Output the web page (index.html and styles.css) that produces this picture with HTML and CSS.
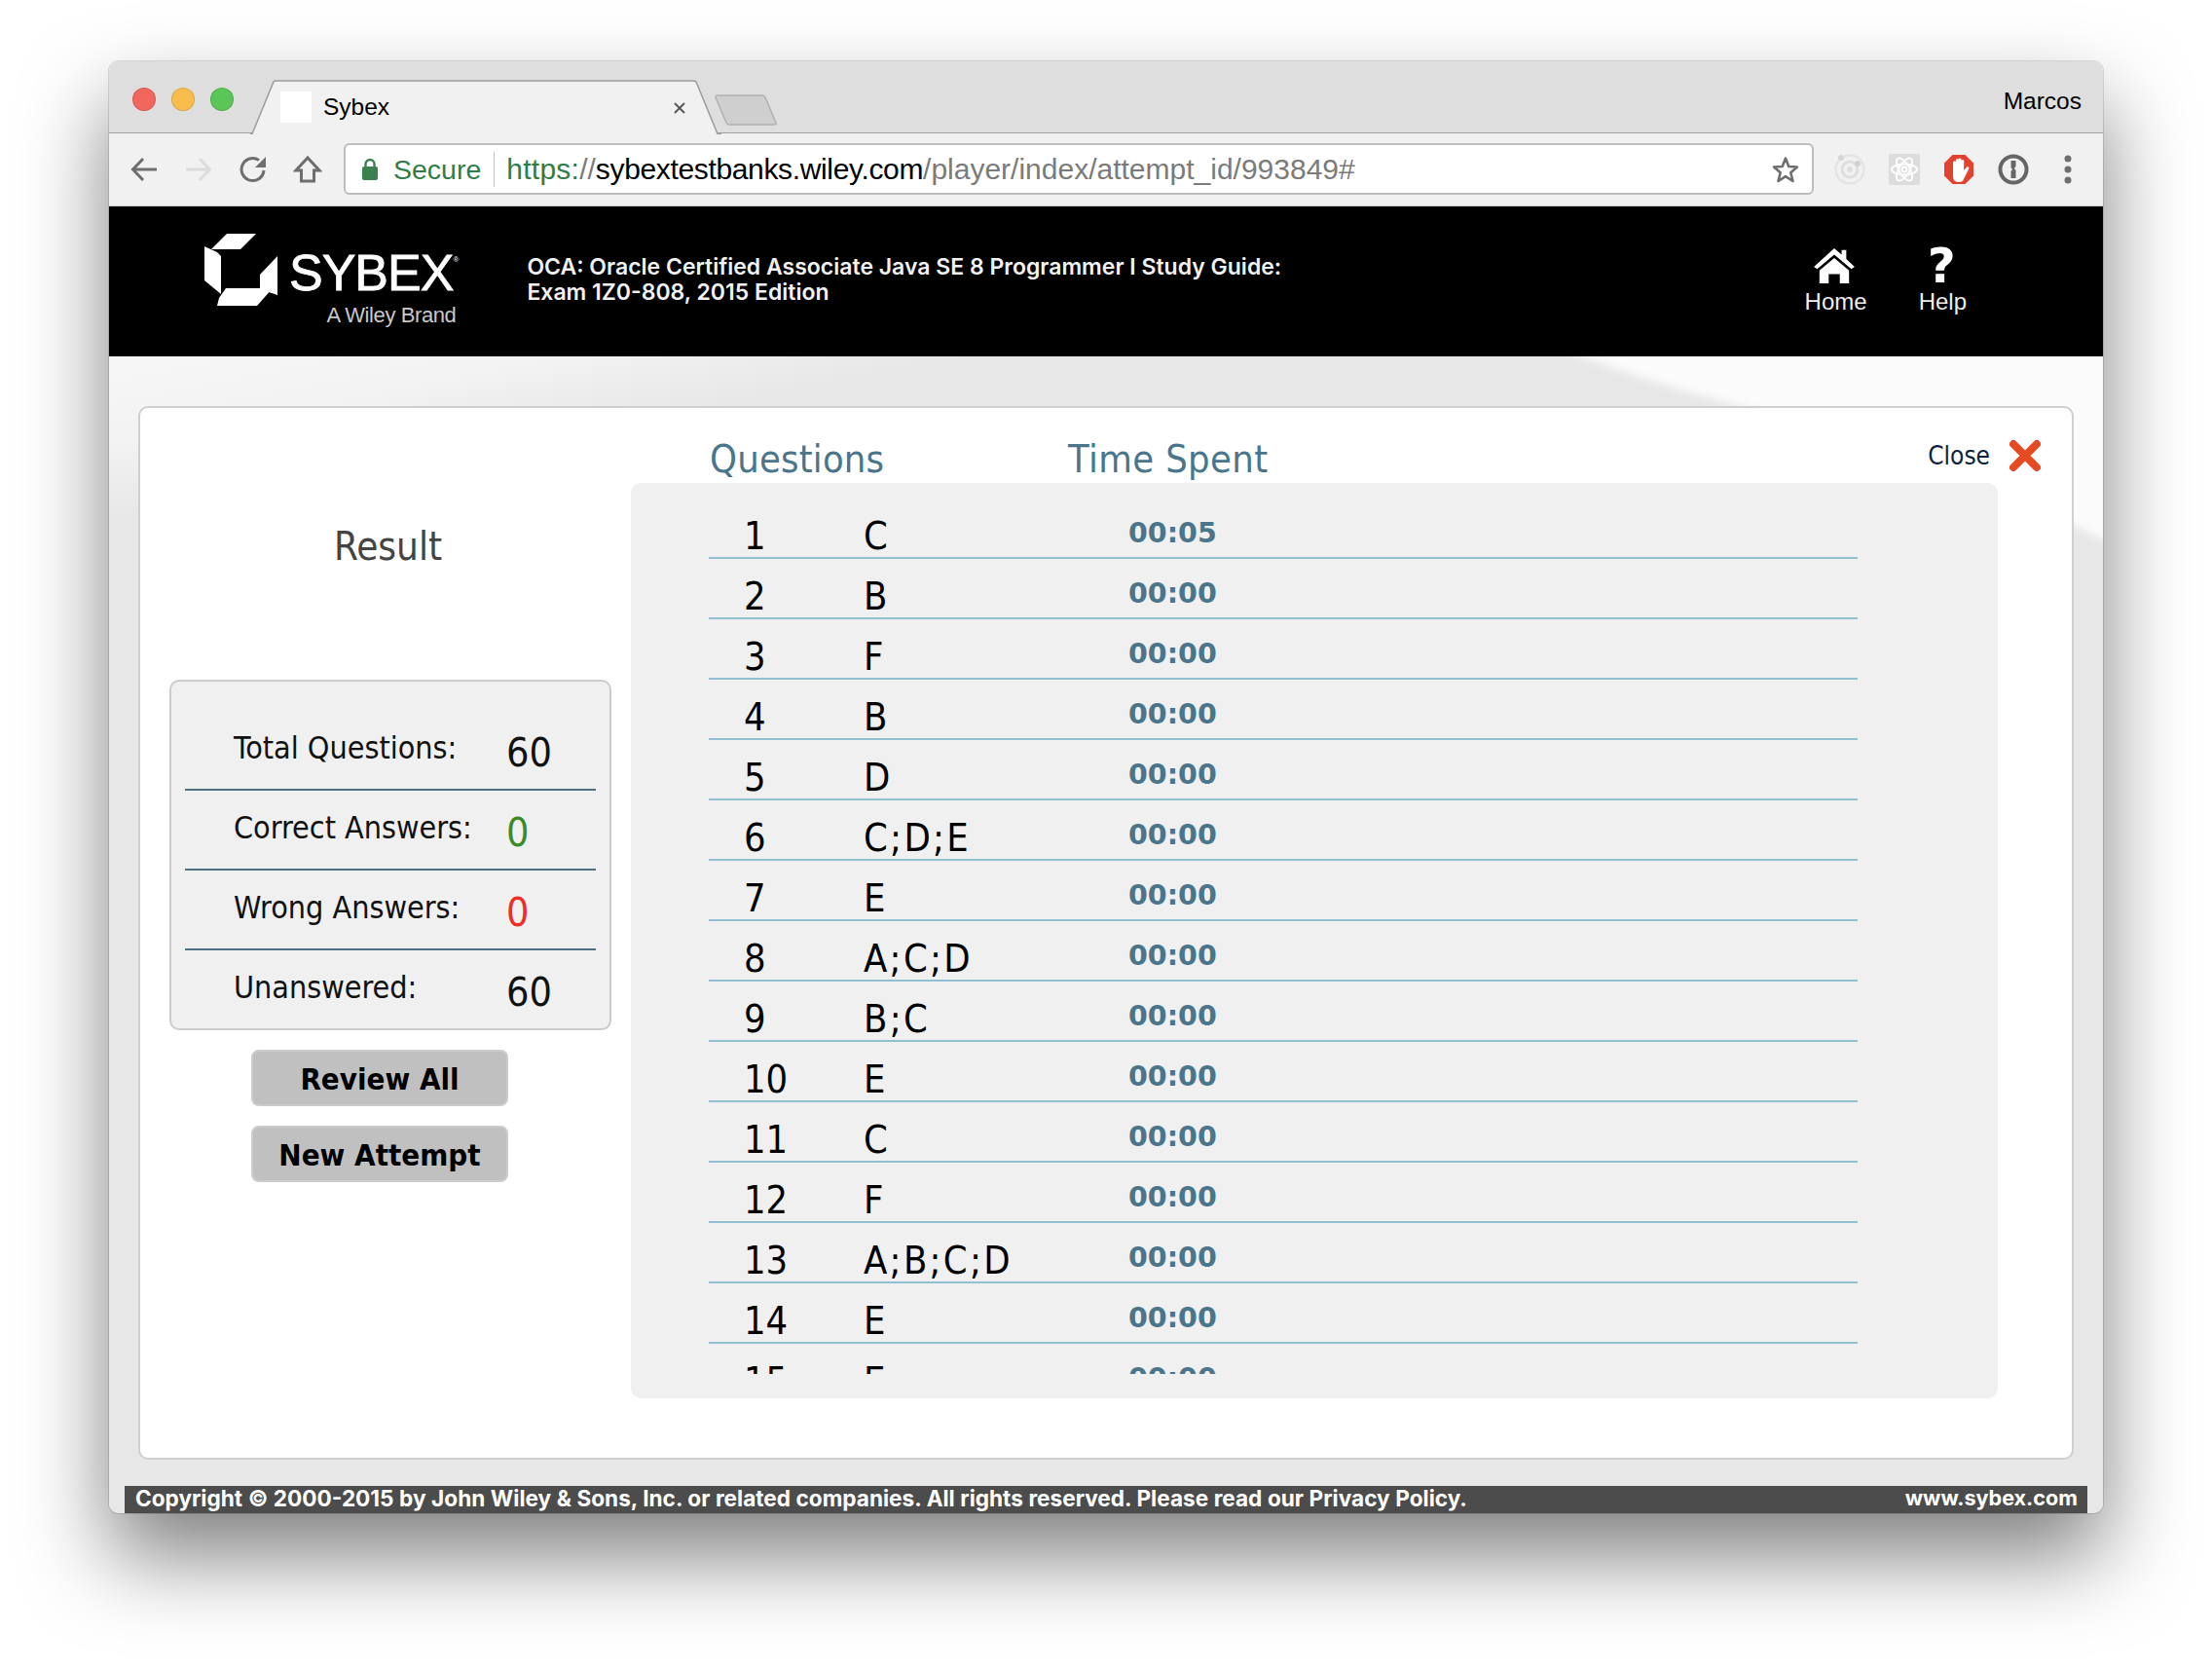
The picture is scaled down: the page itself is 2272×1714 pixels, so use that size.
FILE: index.html
```html
<!DOCTYPE html>
<html lang="en">
<head>
    <meta charset="UTF-8">
    <title>Sybex</title>
    <link rel="stylesheet" href="styles.css">
</head>
<body>

<div class="window">

    <div class="tabstrip">
        <span class="dot dot-red"></span>
        <span class="dot dot-yellow"></span>
        <span class="dot dot-green"></span>
        <div class="tab">
            <svg class="tab-shape" width="484" height="56" viewBox="0 0 484 56"><path d="M0 55.5 L2 55.5 L24 2 Q25 1 27 1 L455 1 Q457 1 458 2 L480 55.5 L484 55.5" fill="#f1f1f1" stroke="#9c9c9c" stroke-width="1.5"/></svg>
            <span class="favicon"></span>
            <span class="tab-title">Sybex</span>
            <svg class="tab-close" width="14" height="14" viewBox="0 0 14 14"><path d="M2 2 L12 12 M12 2 L2 12" stroke="#555" stroke-width="1.8"/></svg>
        </div>
        <svg class="newtab" width="66" height="34" viewBox="0 0 66 34"><path d="M4 2 H50 Q52 2 53 4 L64 30 Q64.500 32 62 32 H16 Q14 32 13 30 L2 4 Q2 2 4 2 Z" fill="#cfcfcf" stroke="#b0b0b0" stroke-width="1.500"/></svg>
        <span class="profile">Marcos</span>
    </div>

    <div class="toolbar">
        <span class="tool"><svg width="28" height="28" viewBox="0 0 28 28"><path d="M27 14 H3 M13 3 L2.500 14 L13 25" fill="none" stroke="#6e6e6e" stroke-width="3"/></svg></span>
        <span class="tool"><svg width="28" height="28" viewBox="0 0 28 28"><path d="M1 14 H25 M15 3 L25.500 14 L15 25" fill="none" stroke="#dcdcdc" stroke-width="3"/></svg></span>
        <span class="tool"><svg width="28" height="28" viewBox="0 0 28 28"><path d="M25 15 A11.500 11.500 0 1 1 20 4.500" fill="none" stroke="#6e6e6e" stroke-width="3"/><path d="M27 1 V12 H16 Z" fill="#6e6e6e"/></svg></span>
        <span class="tool"><svg width="30" height="30" viewBox="0 0 30 30"><path d="M15 3 L3 16 H8.500 V27 H21.500 V16 H27 Z" fill="none" stroke="#6e6e6e" stroke-width="3"/></svg></span>

        <div class="omnibox">
            <svg class="lock" width="18" height="24" viewBox="0 0 18 24"><rect x="1" y="9" width="16" height="14" rx="2" fill="#3a8150"/><path d="M4.500 10 V6.500 A4.500 4.500 0 0 1 13.500 6.500 V10" fill="none" stroke="#3a8150" stroke-width="2.400"/></svg>
            <span class="secure">Secure</span>
            <span class="url"><span class="url-scheme">https:</span><span class="url-dim">//</span><span class="url-host">sybextestbanks.wiley.com</span><span class="url-dim">/player/index/attempt_id/993849#</span></span>
            <svg class="star" width="30" height="30" viewBox="0 0 30 30"><path d="M15 3.500 L18.300 12 L27 12.500 L20.300 18.200 L22.500 27 L15 22.200 L7.500 27 L9.700 18.200 L3 12.500 L11.700 12 Z" fill="none" stroke="#6e6e6e" stroke-width="2.600" stroke-linejoin="round"/></svg>
        </div>

        <div class="extensions">
            <span class="tool"><svg width="32" height="34" viewBox="0 0 32 34"><circle cx="16" cy="17" r="14.500" fill="none" stroke="#e4e4e4" stroke-width="2.500"/><circle cx="16" cy="17" r="8" fill="none" stroke="#dedede" stroke-width="3"/><circle cx="16" cy="17" r="3" fill="#dedede"/><circle cx="7" cy="5" r="3" fill="#d6d6d6"/><circle cx="24" cy="11" r="3" fill="#d0d0d0"/></svg></span>
            <span class="tool"><svg width="32" height="32" viewBox="0 0 32 32"><rect width="32" height="32" rx="2" fill="#dcdcdc"/><g fill="none" stroke="#fff" stroke-width="1.800"><ellipse cx="16" cy="16" rx="13" ry="5.500"/><ellipse cx="16" cy="16" rx="13" ry="5.500" transform="rotate(60 16 16)"/><ellipse cx="16" cy="16" rx="13" ry="5.500" transform="rotate(120 16 16)"/><circle cx="16" cy="16" r="2.500"/></g></svg></span>
            <span class="tool"><svg width="32" height="32" viewBox="0 0 32 32"><path d="M9.500 1 H22.500 L31 9.500 V22.500 L22.500 31 H9.500 L1 22.500 V9.500 Z" fill="#e2432f"/><path d="M10 16 V9 a1.400 1.400 0 0 1 2.800 0 V6.500 a1.400 1.400 0 0 1 2.800 0 V6 a1.400 1.400 0 0 1 2.800 0 V7.500 a1.400 1.400 0 0 1 2.800 0 V17 L24 13.500 a1.500 1.500 0 0 1 2.300 1.800 L21 26 Q20 29 16 29 Q10 29 10 23 Z" fill="#fff"/></svg></span>
            <span class="tool"><svg width="32" height="32" viewBox="0 0 32 32"><circle cx="16" cy="16" r="13.500" fill="none" stroke="#666" stroke-width="4"/><path d="M13.500 7 H18.500 V13 L16.800 15 L18.500 17 V25 H13.500 V18 L15 16 L13.500 14 Z" fill="#666"/></svg></span>
            <span class="tool"><svg width="8" height="30" viewBox="0 0 8 30"><circle cx="4" cy="4" r="3.500" fill="#6e6e6e"/><circle cx="4" cy="15" r="3.500" fill="#6e6e6e"/><circle cx="4" cy="26" r="3.500" fill="#6e6e6e"/></svg></span>
        </div>
    </div>

    <div class="site-header">
        <div class="logo">
            <svg class="logo-mark" width="78" height="78" viewBox="0 0 78 78">
                <g fill="#fff">
                    <path d="M24 1 H54 L38 17 H8 Z"/>
                    <path d="M1 14 L14 20 L18 24 V63 L1 49 Z"/>
                    <path d="M23 57 H71 L55 75 H14 L16 67 Z"/>
                    <path d="M76 24 V64 L58 58 V43 Z"/>
                </g>
            </svg>
            <div class="logo-words">
                <span class="logo-name">SYBEX<span class="logo-reg">®</span></span>
                <span class="logo-tag">A Wiley Brand</span>
            </div>
        </div>
        <div class="book-title">
            OCA: Oracle Certified Associate Java SE 8 Programmer I Study Guide:<br>
            Exam 1Z0-808, 2015 Edition
        </div>
        <div class="site-nav">
            <div class="nav-item">
                <svg class="nav-icon" width="42" height="38" viewBox="0 0 44 40"><path d="M22 1 L30 8 V3 H35 V12.500 L44 21 L40.500 23.500 L22 8 L3.500 23.500 L0 21 Z M6 25 L22 11.500 L38 25 V39 H28 V29 H16 V39 H6 Z" fill="#fff"/></svg>
                <span>Home</span>
            </div>
            <div class="nav-item">
                <span class="nav-help">?</span>
                <span>Help</span>
            </div>
        </div>
    </div>

    <div class="content">
        <svg class="swoosh" width="2048" height="260" viewBox="0 0 2048 260"><defs><filter id="soft"><feGaussianBlur stdDeviation="4"/></filter></defs><path d="M1485 -10 Q1590 30 1690 55 Q1900 110 2060 195 L2060 -10 Z" fill="#fbfbfb" filter="url(#soft)"/></svg>

        <div class="panel">
            <div class="close">Close <svg width="34" height="34" viewBox="0 0 34 34"><path d="M5 5 L29 29 M29 5 L5 29" stroke="#e54b23" stroke-width="8" stroke-linecap="round"/></svg></div>

            <div class="result-col">
                <div class="result-title">Result</div>
                <div class="result-box">
                    <div class="result-row"><span class="result-label">Total Questions:</span><span class="result-value">60</span></div>
                    <div class="result-row"><span class="result-label">Correct Answers:</span><span class="result-value good">0</span></div>
                    <div class="result-row"><span class="result-label">Wrong Answers:</span><span class="result-value bad">0</span></div>
                    <div class="result-row"><span class="result-label">Unanswered:</span><span class="result-value">60</span></div>
                </div>
                <button class="btn">Review All</button>
                <button class="btn">New Attempt</button>
            </div>

            <div class="questions-col">
                <div class="questions-head">
                    <span class="head-questions">Questions</span>
                    <span>Time Spent</span>
                </div>
                <div class="questions-box">
                    <div class="rows">
                        <div class="row"><span>1</span><span class="answer">C</span><span class="time">00:05</span></div>
                        <div class="row"><span>2</span><span class="answer">B</span><span class="time">00:00</span></div>
                        <div class="row"><span>3</span><span class="answer">F</span><span class="time">00:00</span></div>
                        <div class="row"><span>4</span><span class="answer">B</span><span class="time">00:00</span></div>
                        <div class="row"><span>5</span><span class="answer">D</span><span class="time">00:00</span></div>
                        <div class="row"><span>6</span><span class="answer">C;D;E</span><span class="time">00:00</span></div>
                        <div class="row"><span>7</span><span class="answer">E</span><span class="time">00:00</span></div>
                        <div class="row"><span>8</span><span class="answer">A;C;D</span><span class="time">00:00</span></div>
                        <div class="row"><span>9</span><span class="answer">B;C</span><span class="time">00:00</span></div>
                        <div class="row"><span>10</span><span class="answer">E</span><span class="time">00:00</span></div>
                        <div class="row"><span>11</span><span class="answer">C</span><span class="time">00:00</span></div>
                        <div class="row"><span>12</span><span class="answer">F</span><span class="time">00:00</span></div>
                        <div class="row"><span>13</span><span class="answer">A;B;C;D</span><span class="time">00:00</span></div>
                        <div class="row"><span>14</span><span class="answer">E</span><span class="time">00:00</span></div>
                        <div class="row"><span>15</span><span class="answer">E</span><span class="time">00:00</span></div>
                    </div>
                </div>
            </div>
        </div>

        <div class="site-footer">
            <span>Copyright © 2000-2015 by John Wiley &amp; Sons, Inc. or related companies. All rights reserved. Please read our Privacy Policy.</span>
            <span class="footer-link">www.sybex.com</span>
        </div>
    </div>
</div>

</body>
</html>
```

FILE: styles.css
```css
body {
    margin: 0;
    padding: 63px 112px 0 112px;
    height: 1714px;
    box-sizing: border-box;
    background-color: #fff;
    overflow: hidden;
    font-family: "Liberation Sans", Arial, sans-serif;
}

.window {
    height: 1491px;
    border-radius: 10px;
    box-shadow: 0 44px 88px rgba(0, 0, 0, 0.5), 0 0 0 1px rgba(0, 0, 0, 0.12);
    overflow: hidden;
    display: flex;
    flex-direction: column;
}

/* browser chrome */
.tabstrip {
    height: 73px;
    flex: none;
    display: flex;
    background-color: #dedede;
    border-bottom: 1px solid #a0a0a0;
    padding: 0 22px 0 24px;
    position: relative;
}

.dot {
    width: 24px;
    height: 24px;
    border-radius: 50%;
    margin: 27px 16px 0 0;
    box-sizing: border-box;
    border: 1px solid rgba(0, 0, 0, 0.12);
}

.dot-red { background-color: #f2665e; }
.dot-yellow { background-color: #f8bd4c; }
.dot-green { background-color: #5ac658; }

.tab {
    position: relative;
    width: 482px;
    height: 56px;
    margin: 19px 0 0 1px;
    display: flex;
    align-items: flex-start;
}

.tab-shape {
    position: absolute;
    left: 0;
    top: 0;
}

.favicon {
    position: relative;
    width: 32px;
    height: 32px;
    margin: 12px 0 0 31px;
    background-color: #fff;
}

.tab-title {
    position: relative;
    margin: 14px 0 0 12px;
    font-size: 24.5px;
    line-height: 28px;
    color: #000;
}

.tab-close {
    position: absolute;
    left: 434px;
    top: 22px;
}

.newtab {
    margin: 33px 0 0 -6px;
}

.profile {
    margin: 26px 0 0 auto;
    font-size: 24.5px;
    line-height: 30px;
    color: #000;
}

.toolbar {
    height: 74px;
    flex: none;
    display: flex;
    align-items: center;
    padding: 0 8px;
    background-color: #f1f1f1;
    border-bottom: 1px solid #cfcfcf;
}

.tool {
    width: 56px;
    height: 56px;
    flex: none;
    display: flex;
    align-items: center;
    justify-content: center;
}

.omnibox {
    flex: 1;
    height: 53px;
    margin: -1px 9px 0 9px;
    box-sizing: border-box;
    display: flex;
    align-items: center;
    background-color: #fff;
    border: 2px solid #bdbdbd;
    border-radius: 6px;
    padding: 0 12px 0 16px;
    font-size: 30px;
}

.secure {
    margin-left: 15px;
    padding-right: 13px;
    font-size: 28.5px;
    line-height: 36px;
    color: #2f7d4c;
    border-right: 1px solid #c4c4c4;
}

.url { margin-left: 12px; }
.url-scheme { color: #2f7d4c; letter-spacing: 0.25px; }
.url-dim { color: #7b7b7b; }
.url-host { color: #000; letter-spacing: -0.35px; }

.star { margin-left: auto; }

.extensions {
    display: flex;
    flex: none;
}

/* site header */
.site-header {
    height: 154px;
    flex: none;
    display: flex;
    align-items: center;
    background-color: #000;
    color: #fff;
    padding: 0 140px 0 97px;
}

.logo {
    display: flex;
    align-items: flex-start;
    height: 100px;
}

.logo-mark { flex: none; }

.logo-words {
    display: flex;
    flex-direction: column;
    align-items: flex-end;
    margin-left: 10px;
}

.logo-name {
    position: relative;
    font-size: 52px;
    line-height: 44px;
    letter-spacing: -1px;
    margin-top: 19px;
    -webkit-text-stroke: 0.8px #fff;
}

.logo-reg {
    position: absolute;
    right: -6px;
    top: 4px;
    font-size: 8px;
    line-height: 10px;
    letter-spacing: 0;
    -webkit-text-stroke: 0;
}

.logo-tag {
    font-size: 22px;
    line-height: 28px;
    margin: 8px -3px 0 0;
    letter-spacing: -0.4px;
    color: #c8c8c8;
}

.book-title {
    margin-left: 76px;
    margin-top: -4px;
    font-family: Inter, sans-serif;
    font-weight: 600;
    font-size: 23px;
    line-height: 26px;
    color: #f2f2f2;
}

.site-nav {
    margin-left: auto;
    display: flex;
    gap: 53px;
}

.nav-item {
    display: flex;
    flex-direction: column;
    align-items: center;
    font-size: 24px;
    line-height: 28px;
    color: #eee;
}

.nav-icon { margin: 0 4px 4px 0; }

.nav-help {
    height: 42px;
    margin: -2px 2px 2px 0;
    font-family: "DejaVu Sans", sans-serif;
    font-weight: bold;
    font-size: 50px;
    line-height: 42px;
    color: #fff;
}

/* page */
.content {
    position: relative;
    flex: 1;
    display: flex;
    flex-direction: column;
    padding: 51px 0 0 30px;
    background: linear-gradient(169deg, #f7f7f7 0, #f2f2f2 6%, #e7e7e7 11%);
    font-family: "DejaVu Sans", sans-serif;
    font-stretch: condensed;
}

.swoosh {
    position: absolute;
    left: 0;
    top: 0;
}

.panel {
    position: relative;
    width: 1988px;
    height: 1082px;
    flex: none;
    box-sizing: border-box;
    display: flex;
    background-color: #fff;
    border: 2px solid #cfcfcf;
    border-radius: 10px;
}

.close {
    position: absolute;
    right: 31px;
    top: 32px;
    display: flex;
    align-items: center;
    gap: 19px;
    font-size: 26px;
    line-height: 34px;
    color: #0c2340;
}

.result-col {
    width: 454px;
    margin-left: 30px;
    flex: none;
}

.result-title {
    height: 279px;
    box-sizing: border-box;
    padding: 120px 5px 0 0;
    text-align: center;
    font-size: 40px;
    line-height: 44px;
    color: #444;
}

.result-box {
    height: 360px;
    box-sizing: border-box;
    padding: 30px 14px 0;
    background-color: #f0f0f0;
    border: 2px solid #ccc;
    border-radius: 10px;
    margin-bottom: 20px;
}

.result-row {
    height: 82px;
    box-sizing: border-box;
    display: grid;
    grid-template-columns: 330px 1fr;
    padding-left: 50px;
    border-bottom: 2px solid #4e7080;
    color: #111;
}

.result-row:last-child { border-bottom: none; }

.result-label {
    font-size: 32px;
    line-height: 36px;
    margin-top: 20px;
}

.result-value {
    margin-left: -50px;
    font-size: 41px;
    line-height: 44px;
    margin-top: 21px;
}

.good { color: #3c8a28; }
.bad { color: #ef2d26; }

.btn {
    display: block;
    width: 264px;
    height: 58px;
    margin: 0 0 20px 84px;
    padding: 2px 0 0;
    background-color: #c0c0c0;
    border: 2px solid #ccc;
    border-radius: 8px;
    font-family: inherit;
    font-stretch: condensed;
    font-weight: bold;
    font-size: 31px;
    color: #000;
}

.questions-col {
    width: 1404px;
    margin-left: 20px;
    flex: none;
}

.questions-head {
    height: 77px;
    box-sizing: border-box;
    display: flex;
    padding: 30px 0 0 81px;
    font-size: 39.5px;
    line-height: 44px;
    letter-spacing: 0.4px;
    color: #4a758a;
}

.head-questions { width: 368px; letter-spacing: 0.2px; }

.questions-box {
    height: 940px;
    box-sizing: border-box;
    padding: 16px 0 0 80px;
    background-color: #f0f0f0;
    border-radius: 10px;
}

.rows {
    width: 1180px;
    height: 899px;
    overflow: hidden;
}

.row {
    height: 62px;
    box-sizing: border-box;
    display: grid;
    grid-template-columns: 123px 272px 1fr;
    padding: 16px 0 0 36px;
    border-bottom: 2px solid #92bfd2;
    font-size: 39.5px;
    line-height: 44px;
    color: #000;
}

.answer { letter-spacing: 2.3px; }

.time {
    margin-top: 2px;
    font-stretch: normal;
    font-weight: bold;
    font-size: 28.5px;
    line-height: 36px;
    letter-spacing: 0;
    color: #4a758a;
}

.site-footer {
    width: 2016px;
    height: 28px;
    flex: none;
    box-sizing: border-box;
    margin: 27px 0 0 -14px;
    padding: 0 10px 0 11px;
    display: flex;
    justify-content: space-between;
    background-color: #4c4c4c;
    color: #fff;
    font-family: Inter, sans-serif;
    font-stretch: normal;
    font-weight: 700;
    font-size: 22.6px;
    line-height: 25px;
    word-spacing: 0.2px;
}

.footer-link { font-size: 21.6px; }
```
